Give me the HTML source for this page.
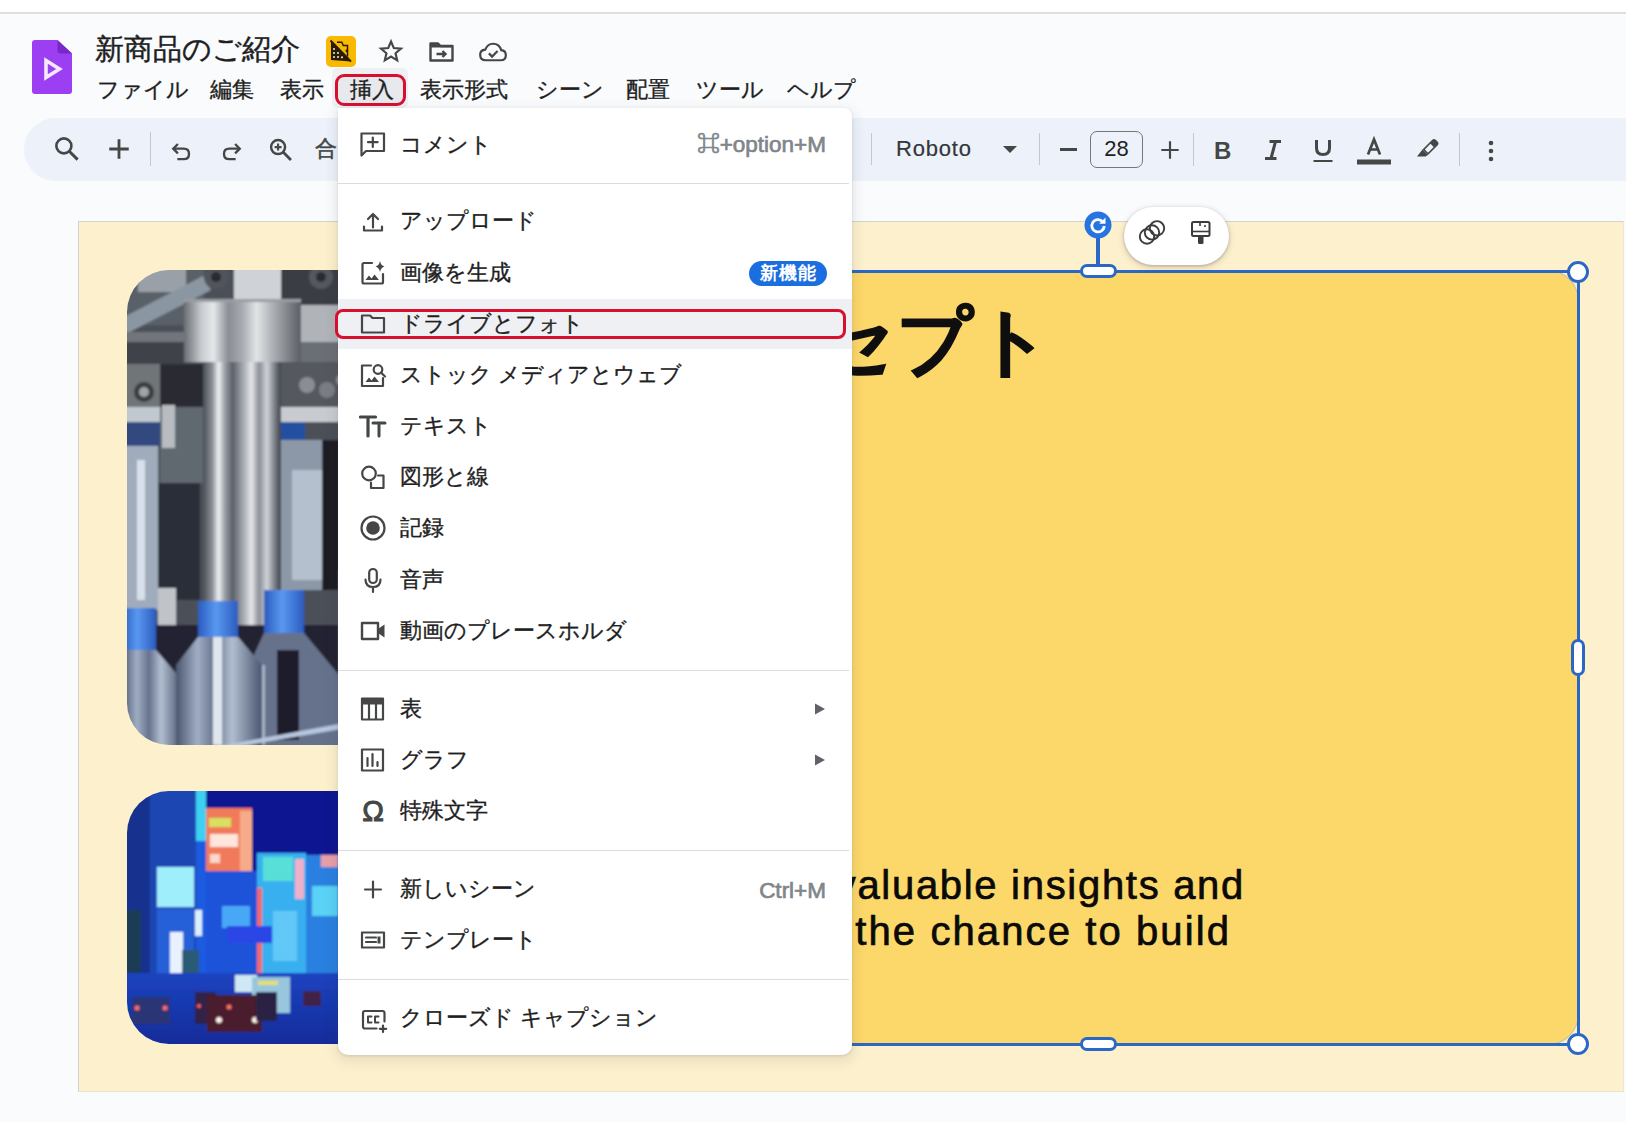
<!DOCTYPE html>
<html lang="ja">
<head>
<meta charset="utf-8">
<style>
*{margin:0;padding:0;box-sizing:border-box;}
html,body{width:1626px;height:1122px;overflow:hidden;background:#f9fbfd;font-family:"Liberation Sans",sans-serif;color:#1f1f1f;}
.abs{position:absolute;}
#topstrip{left:0;top:0;width:1626px;height:12px;background:#fff;}
#topline{left:0;top:12px;width:1626px;height:2px;background:#dde0e0;}
#title{left:95px;top:31px;font-size:29px;line-height:36px;white-space:nowrap;color:#1f1f1f;-webkit-text-stroke:0.4px #1f1f1f;}
.menu-top{top:76px;font-size:22px;line-height:28px;white-space:nowrap;color:#1f1f1f;-webkit-text-stroke:0.35px #1f1f1f;}
#toolbar{left:24px;top:118px;width:1640px;height:63px;border-radius:32px;background:#edf2fa;}
.sep{width:1px;background:#c7c7c7;}
svg{display:block;}
.msep{left:338px;width:511px;height:1px;background:#dadce0;}
.mi{left:400px;font-size:22px;line-height:30px;white-space:nowrap;color:#1f1f1f;-webkit-text-stroke:0.35px #1f1f1f;}
.msc{left:600px;width:226px;text-align:right;font-size:22.5px;line-height:30px;color:#80868b;white-space:nowrap;-webkit-text-stroke:0.7px #80868b;}
.mic{left:359px;}
.mic *{stroke-linecap:round;stroke-linejoin:round;}
.bt{font-size:40px;line-height:46px;letter-spacing:1.4px;color:#0a0a0a;text-align:right;white-space:nowrap;-webkit-text-stroke:0.7px #0a0a0a;}
</style>
</head>
<body>
<div id="topstrip" class="abs"></div>
<div id="topline" class="abs"></div>

<!-- logo -->
<svg class="abs" style="left:32px;top:40px" width="40" height="54" viewBox="0 0 40 54">
  <path d="M3 0 H25.5 L40 13.5 V51 Q40 54 37 54 H3 Q0 54 0 51 V3 Q0 0 3 0 Z" fill="#9c3ff2"/>
  <path d="M25.5 0 L40 13.5 H28.5 Q25.5 13.5 25.5 10.5 Z" fill="#7a27c9"/>
  <path d="M14 20.5 L27.5 29 L14 37.5 Z" fill="none" stroke="#f6e8ff" stroke-width="3.6" stroke-linejoin="miter"/>
</svg>

<div id="title" class="abs">新商品のご紹介</div>

<!-- title badges -->
<div class="abs" style="left:326px;top:36px;width:30px;height:31px;border-radius:5px;background:#f9b900;"></div>
<svg class="abs" style="left:326px;top:36px" width="30" height="31" viewBox="0 0 30 31">
  <path d="M5 5 L5 24 L25 25.5 Z" fill="#2a1c04"/>
  <g fill="#e9dcbc"><circle cx="8" cy="13" r="1.1"/><circle cx="8" cy="17" r="1.1"/><circle cx="12" cy="17" r="1.1"/><circle cx="8" cy="21" r="1.1"/><circle cx="12" cy="21" r="1.1"/><circle cx="16" cy="21.3" r="1.1"/></g>
  <path d="M11 6.3 H15.8 L17.3 9.6 H21.5 V20.5" fill="none" stroke="#2a1c04" stroke-width="1.5"/>
  <circle cx="20.8" cy="14.8" r="1.3" fill="#2a1c04"/>
  <path d="M4.5 4.5 L25 25.5" stroke="#2a1c04" stroke-width="1.8"/>
</svg>
<svg class="abs" style="left:378px;top:38px" width="26" height="26" viewBox="0 0 24 24">
  <path d="M12 3.2 L14.6 9.3 L21.2 9.8 L16.2 14.1 L17.7 20.6 L12 17.1 L6.3 20.6 L7.8 14.1 L2.8 9.8 L9.4 9.3 Z" fill="none" stroke="#444746" stroke-width="2" stroke-linejoin="miter"/>
</svg>
<svg class="abs" style="left:428px;top:40px" width="28" height="24" viewBox="0 0 28 24">
  <path d="M2.5 3.5 H10 L12.5 6 H24.5 V20.5 H2.5 Z" fill="none" stroke="#444746" stroke-width="2.4" stroke-linejoin="round"/>
  <path d="M2.5 3.5 H10 L12.5 6 H24.5 V7.5 H2.5 Z" fill="#444746"/>
  <path d="M8.5 14 H17.5 M14.5 11 L17.5 14 L14.5 17" fill="none" stroke="#444746" stroke-width="2.4"/>
</svg>
<svg class="abs" style="left:478px;top:41px" width="30" height="22" viewBox="0 0 32 24">
  <path d="M8 21 Q2 21 2 15 Q2 10 7.5 9.5 Q10 3 16 3 Q23 3 25 10 Q30 10.5 30 15.5 Q30 21 24.5 21 Z" fill="none" stroke="#444746" stroke-width="2.4"/>
  <path d="M11.5 13.5 L15 17 L21 11" fill="none" stroke="#444746" stroke-width="2.4"/>
</svg>

<!-- menubar -->
<div class="abs menu-top" style="left:97px">ファイル</div>
<div class="abs menu-top" style="left:210px">編集</div>
<div class="abs menu-top" style="left:280px">表示</div>
<div class="abs" style="left:332px;top:68px;width:76px;height:40px;border-radius:5px;background:#eef0f3;"></div>
<div class="abs" style="left:337px;top:76px;width:67px;height:28px;border-radius:6px;background:#e7e9ec;"></div>
<div class="abs menu-top" style="left:350px">挿入</div>
<div class="abs" style="left:335px;top:74px;width:71px;height:32px;border-radius:9px;border:3.5px solid #d8102e;"></div>
<div class="abs menu-top" style="left:420px">表示形式</div>
<div class="abs menu-top" style="left:536px">シーン</div>
<div class="abs menu-top" style="left:626px">配置</div>
<div class="abs menu-top" style="left:696px">ツール</div>
<div class="abs menu-top" style="left:787px">ヘルプ</div>

<!-- toolbar -->
<div id="toolbar" class="abs"></div>


<!-- slide -->
<div class="abs" style="left:78px;top:221px;width:1546px;height:871px;background:#fdf0cd;border:1px solid #d4d2cc;border-right-color:#eee6cf;border-bottom:1px solid #e8e2cf;"></div>

<!-- photo 1: factory -->
<svg class="abs" style="left:127px;top:270px" width="240" height="475" viewBox="0 0 240 475">
  <defs>
    <clipPath id="c1"><rect x="0" y="0" width="400" height="475" rx="42" ry="42"/></clipPath>
    <linearGradient id="cyl" x1="0" x2="1" y1="0" y2="0">
      <stop offset="0" stop-color="#6a6e74"/><stop offset="0.15" stop-color="#c8ccd0"/><stop offset="0.25" stop-color="#e6e8ea"/><stop offset="0.38" stop-color="#8a8e94"/><stop offset="0.5" stop-color="#a8acb2"/><stop offset="0.62" stop-color="#e2e4e6"/><stop offset="0.75" stop-color="#b0b4b8"/><stop offset="0.9" stop-color="#7c8086"/><stop offset="1" stop-color="#5a5e64"/>
    </linearGradient>
    <linearGradient id="col" x1="0" x2="1" y1="0" y2="0">
      <stop offset="0" stop-color="#4a4e56"/><stop offset="0.12" stop-color="#8c9198"/><stop offset="0.2" stop-color="#f0f2f4"/><stop offset="0.28" stop-color="#9a9ea6"/><stop offset="0.38" stop-color="#5c6068"/><stop offset="0.55" stop-color="#b8bcc2"/><stop offset="0.62" stop-color="#e6e8ea"/><stop offset="0.72" stop-color="#8a8e96"/><stop offset="0.82" stop-color="#d0d4d8"/><stop offset="0.92" stop-color="#7a7e86"/><stop offset="1" stop-color="#3e424a"/>
    </linearGradient>
    <linearGradient id="bod" x1="0" x2="1" y1="0" y2="0">
      <stop offset="0" stop-color="#4a5670"/><stop offset="0.25" stop-color="#a0aec4"/><stop offset="0.45" stop-color="#66728c"/><stop offset="0.65" stop-color="#b2bed0"/><stop offset="1" stop-color="#4a5670"/>
    </linearGradient>
    <linearGradient id="cap" x1="0" x2="1" y1="0" y2="0">
      <stop offset="0" stop-color="#2a5cc0"/><stop offset="0.45" stop-color="#5a98f0"/><stop offset="1" stop-color="#2a5cc0"/>
    </linearGradient>
    <filter id="bl1" x="-5%" y="-5%" width="110%" height="110%"><feGaussianBlur stdDeviation="1"/></filter>
  </defs>
  <g clip-path="url(#c1)"><g filter="url(#bl1)">
    <rect x="-5" y="-5" width="250" height="485" fill="#4c5058"/>
    <rect x="-5" y="-5" width="82" height="60" fill="#5a6068"/>
    <rect x="11" y="-5" width="48" height="27" fill="#9aa0a8"/>
    <path d="M-5 48 L76 6 L84 20 L-5 66 Z" fill="#8a96a2"/>
    <rect x="107" y="-5" width="47" height="36" fill="#cfd3d7"/>
    <rect x="154" y="-5" width="90" height="40" fill="#3a3e44"/>
    <circle cx="89" cy="7" r="12" fill="#50545a"/><circle cx="89" cy="7" r="5" fill="#2a2c30"/>
    <circle cx="194" cy="7" r="12" fill="#55595e"/><circle cx="194" cy="7" r="5" fill="#2a2c30"/>
    <rect x="174" y="35" width="70" height="37" fill="#b0b4b8"/>
    <rect x="174" y="72" width="70" height="20" fill="#6a6e74"/>
    <rect x="-5" y="62" width="62" height="10" fill="#70767c"/>
    <rect x="-5" y="72" width="62" height="22" fill="#40424a"/>
    <rect x="-5" y="94" width="38" height="43" fill="#707478"/>
    <circle cx="17" cy="122" r="10" fill="#3a3c40"/><circle cx="17" cy="122" r="5" fill="#a0a4a8"/>
    <rect x="33" y="94" width="43" height="43" fill="#2a2c30"/>
    <rect x="-5" y="137" width="38" height="15" fill="#c0c8d0"/>
    <rect x="-5" y="152" width="38" height="24" fill="#304880"/>
    <rect x="-5" y="176" width="36" height="164" fill="#a0acbc"/>
    <rect x="10" y="190" width="8" height="140" fill="#d8e0ea"/>
    <rect x="33" y="137" width="43" height="76" fill="#606870"/>
    <rect x="35" y="135" width="13" height="43" fill="#b8bcc0"/>
    <rect x="31" y="213" width="42" height="117" fill="#2a2e38"/>
    <rect x="31" y="318" width="18" height="45" fill="#c0c4c8"/>
    <rect x="154" y="92" width="90" height="45" fill="#55595e"/>
    <circle cx="180" cy="115" r="8" fill="#8a8e92"/><circle cx="200" cy="120" r="8" fill="#7a7e84"/><circle cx="215" cy="110" r="6" fill="#90949a"/>
    <rect x="154" y="137" width="90" height="15" fill="#c8ccd0"/>
    <rect x="154" y="152" width="24" height="18" fill="#2050a0"/>
    <rect x="154" y="170" width="56" height="150" fill="#8c98a8"/>
    <rect x="165" y="200" width="30" height="110" fill="#b4c0ce"/>
    <rect x="195" y="170" width="50" height="150" fill="#1a1c24"/>
    <rect x="57" y="29" width="117" height="63" fill="url(#cyl)"/>
    <rect x="57" y="29" width="117" height="3" fill="#9a9ea4"/>
    <rect x="76" y="92" width="78" height="290" fill="url(#col)"/>
    <rect x="-5" y="355" width="250" height="125" fill="#202430"/>
    <path d="M-5 338 H29 V380 L55 410 V480 H-5 Z" fill="url(#bod)"/>
    <rect x="-5" y="338" width="34" height="42" fill="url(#cap)"/>
    <path d="M137 320 H177 V363 L212 405 V480 H120 V400 L137 363 Z" fill="#66728c"/>
    <rect x="150" y="380" width="22" height="90" fill="#1a1e2a"/>
    <rect x="128" y="395" width="10" height="80" fill="#a6b2c6"/>
    <rect x="137" y="320" width="40" height="43" fill="url(#cap)"/>
    <path d="M71 331 H111 V367 L135 395 V480 H49 V395 L71 367 Z" fill="url(#bod)"/>
    <rect x="86" y="367" width="9" height="108" fill="#e0e6ee"/>
    <rect x="71" y="331" width="40" height="36" fill="url(#cap)"/>
    <rect x="212" y="300" width="33" height="180" fill="#7a86a0"/>
    <path d="M82 478 L245 448 L245 454 L90 480 Z" fill="#b8c8e0"/>
  </g></g>
</svg>

<!-- photo 2: city -->
<svg class="abs" style="left:127px;top:791px" width="240" height="253" viewBox="0 0 240 253">
  <defs>
    <clipPath id="c2"><rect x="0" y="0" width="400" height="253" rx="42" ry="42"/></clipPath>
    <linearGradient id="street" x1="0" x2="0" y1="0" y2="1"><stop offset="0" stop-color="#1c44c0"/><stop offset="1" stop-color="#122a98"/></linearGradient>
    <filter id="bl2" x="-5%" y="-5%" width="110%" height="110%"><feGaussianBlur stdDeviation="1.3"/></filter>
  </defs>
  <g clip-path="url(#c2)"><g filter="url(#bl2)">
    <rect x="-5" y="-5" width="250" height="265" fill="#0b1890"/>
    <rect x="-5" y="-5" width="74" height="200" fill="#1a46b2"/>
    <rect x="-5" y="-5" width="28" height="200" fill="#13308e"/>
    <rect x="69" y="-5" width="10" height="55" fill="#3ed0f2"/>
    <rect x="69" y="50" width="10" height="140" fill="#1a5ae0"/>
    <rect x="30" y="76" width="37" height="40" fill="#9eeefc"/>
    <rect x="30" y="118" width="37" height="70" fill="#2660d8"/>
    <rect x="43" y="141" width="13" height="41" fill="#e8f2ff"/>
    <rect x="68" y="119" width="7" height="26" fill="#d8f0ff"/>
    <rect x="79" y="17" width="46" height="63" fill="#f07a5a"/>
    <rect x="113" y="20" width="12" height="60" fill="#f6ac8a"/>
    <rect x="82" y="27" width="22" height="9" fill="#d8e060"/>
    <rect x="83" y="43" width="28" height="13" fill="#fde6dc"/>
    <rect x="83" y="63" width="10" height="9" fill="#fbd8cc"/>
    <rect x="79" y="80" width="51" height="105" fill="#1c52d8"/>
    <rect x="95" y="115" width="28" height="22" fill="#4aa8f6"/>
    <rect x="130" y="62" width="49" height="125" fill="#38b0f0"/>
    <rect x="136" y="66" width="30" height="24" fill="#58e0d8"/>
    <rect x="168" y="68" width="9" height="40" fill="#f0b0c8"/>
    <rect x="130" y="97" width="5" height="90" fill="#f06a6a"/>
    <rect x="146" y="120" width="24" height="50" fill="#62c8f8"/>
    <rect x="179" y="64" width="32" height="123" fill="#2a80e0"/>
    <rect x="194" y="64" width="17" height="12" fill="#e8a0a8"/>
    <rect x="185" y="95" width="26" height="30" fill="#5ad2f6"/>
    <rect x="211" y="64" width="30" height="123" fill="#2874de"/>
    <rect x="100" y="135" width="45" height="17" fill="#2a46e6"/>
    <rect x="-5" y="119" width="19" height="80" fill="#1c3a54"/>
    <rect x="55" y="159" width="17" height="40" fill="#2a5a74"/>
    <rect x="-5" y="182" width="250" height="75" fill="url(#street)"/>
    <rect x="108" y="184" width="22" height="17" fill="#d0e8f4"/>
    <rect x="125" y="186" width="38" height="36" fill="#98c6dc"/>
    <rect x="131" y="190" width="20" height="4" fill="#e8e060"/>
    <rect x="5" y="206" width="38" height="27" fill="#2c3474"/>
    <circle cx="10" cy="217" r="2.5" fill="#ff6a6a"/><circle cx="38" cy="217" r="2.5" fill="#ff6a6a"/>
    <rect x="68" y="201" width="21" height="32" fill="#302244"/>
    <circle cx="72" cy="215" r="2" fill="#ff6060"/>
    <rect x="80" y="204" width="55" height="37" fill="#4a1c2e"/>
    <circle cx="102" cy="216" r="2.5" fill="#ff7060"/>
    <circle cx="92" cy="229" r="3" fill="#fff4e8"/><circle cx="128" cy="229" r="3" fill="#fff4e8"/>
    <rect x="129" y="201" width="21" height="29" fill="#2a2044"/>
    <rect x="176" y="200" width="18" height="15" fill="#40204a"/>
  </g></g>
</svg>

<!-- yellow box -->
<div class="abs" style="left:345px;top:271px;width:1233px;height:773px;background:#fcd769;border-radius:0 30px 30px 0;box-shadow:0 0 0 1px rgba(150,150,150,0.55);"></div>
<div id="concept" class="abs" style="left:432px;top:292px;width:621px;font-size:74px;line-height:100px;font-weight:bold;letter-spacing:2px;color:#0f0f0f;text-align:right;white-space:nowrap;-webkit-text-stroke:1.5px #0f0f0f;">コンセプト</div>
<div id="bt1" class="abs bt" style="left:500px;top:862px;width:745px;letter-spacing:1.7px;">customers gain valuable insights and</div>
<div id="bt2" class="abs bt" style="left:500px;top:908px;width:731px;letter-spacing:2.1px;">customers have the chance to build</div>

<!-- selection -->
<div class="abs" style="left:345px;top:270px;width:1235px;height:776px;border:3px solid #2b67c6;border-left:none;"></div>
<div class="abs" style="left:1096px;top:236px;width:4px;height:30px;background:#2b67c6;"></div>
<svg class="abs" style="left:1083px;top:210px" width="30" height="30" viewBox="0 0 30 30">
  <circle cx="15" cy="15" r="13.5" fill="#2674e0"/>
  <path d="M19.8 11.8 A6.2 6.2 0 1 0 21.2 16" fill="none" stroke="#fff" stroke-width="2.8"/>
  <path d="M22.5 7.5 V13.8 H16.2 Z" fill="#fff"/>
</svg>
<div class="abs" style="left:1080px;top:264px;width:37px;height:14px;border:3px solid #2b67c6;border-radius:7px;background:#fff;"></div>
<div class="abs" style="left:1080px;top:1037px;width:37px;height:14px;border:3px solid #2b67c6;border-radius:7px;background:#fff;"></div>
<div class="abs" style="left:1571px;top:639px;width:14px;height:37px;border:3px solid #2b67c6;border-radius:7px;background:#fff;"></div>
<div class="abs" style="left:1567px;top:261px;width:22px;height:22px;border:3px solid #2b67c6;border-radius:50%;background:#fff;"></div>
<div class="abs" style="left:1567px;top:1033px;width:22px;height:22px;border:3px solid #2b67c6;border-radius:50%;background:#fff;"></div>

<!-- floating mini toolbar -->
<div class="abs" style="left:1124px;top:207px;width:105px;height:58px;border-radius:29px;background:#fff;box-shadow:0 1px 3px rgba(60,64,67,0.3),0 2px 6px 1px rgba(60,64,67,0.15);"></div>
<svg class="abs" style="left:1137px;top:218px" width="30" height="30" viewBox="0 0 30 30">
  <circle cx="10" cy="18.5" r="7.2" fill="none" stroke="#3c3c3c" stroke-width="1.9"/>
  <circle cx="15" cy="14.4" r="7.2" fill="none" stroke="#3c3c3c" stroke-width="1.9"/>
  <circle cx="20" cy="10.3" r="7.2" fill="none" stroke="#3c3c3c" stroke-width="1.9"/>
</svg>
<svg class="abs" style="left:1187px;top:218px" width="26" height="30" viewBox="0 0 26 30">
  <rect x="5" y="4" width="17.5" height="14" rx="1.5" fill="none" stroke="#3c3c3c" stroke-width="2"/>
  <path d="M5 13.5 H22.5" stroke="#3c3c3c" stroke-width="1.6"/>
  <path d="M13 4 V8 M18 7 V9" stroke="#3c3c3c" stroke-width="1.6"/>
  <rect x="11" y="18" width="5.5" height="8" rx="1.5" fill="#3c3c3c"/>
</svg>
<!-- toolbar icons -->
<svg class="abs" style="left:52px;top:134px" width="30" height="30" viewBox="0 0 24 24">
  <circle cx="9.5" cy="9.5" r="6" fill="none" stroke="#444746" stroke-width="2.1"/>
  <path d="M14 14 L20.5 20.5" stroke="#444746" stroke-width="2.4"/>
</svg>
<svg class="abs" style="left:106px;top:136px" width="26" height="26" viewBox="0 0 24 24">
  <path d="M12 3 V21 M3 12 H21" stroke="#444746" stroke-width="2.6"/>
</svg>
<div class="abs sep" style="left:150px;top:132px;height:34px;"></div>
<svg class="abs" style="left:168px;top:137px" width="28" height="28" viewBox="0 0 24 24">
  <path d="M8.5 6 L4.5 10 L8.5 14" fill="none" stroke="#444746" stroke-width="2"/>
  <path d="M5 10 H13.5 Q18 10 18 14.5 Q18 19 13.5 19 H8" fill="none" stroke="#444746" stroke-width="2"/>
</svg>
<svg class="abs" style="left:217px;top:137px" width="28" height="28" viewBox="0 0 24 24">
  <path d="M15.5 6 L19.5 10 L15.5 14" fill="none" stroke="#444746" stroke-width="2"/>
  <path d="M19 10 H10.5 Q6 10 6 14.5 Q6 19 10.5 19 H16" fill="none" stroke="#444746" stroke-width="2"/>
</svg>
<svg class="abs" style="left:267px;top:136px" width="28" height="28" viewBox="0 0 24 24">
  <circle cx="9.5" cy="9.5" r="6" fill="none" stroke="#444746" stroke-width="2.1"/>
  <path d="M14 14 L20.5 20.5" stroke="#444746" stroke-width="2.4"/>
  <path d="M9.5 6.5 V12.5 M6.5 9.5 H12.5" stroke="#444746" stroke-width="1.8"/>
</svg>
<div class="abs" style="left:315px;top:134px;font-size:22px;line-height:30px;color:#444746;-webkit-text-stroke:0.5px #444746;">合</div>

<div class="abs sep" style="left:871px;top:133px;height:32px;"></div>
<div class="abs" style="left:896px;top:134px;font-size:22px;line-height:30px;letter-spacing:0.8px;color:#33373a;-webkit-text-stroke:0.2px #33373a;">Roboto</div>
<svg class="abs" style="left:1000px;top:143px" width="20" height="12" viewBox="0 0 20 12"><path d="M3 3 H17 L10 10 Z" fill="#444746"/></svg>
<div class="abs sep" style="left:1039px;top:133px;height:32px;"></div>
<div class="abs" style="left:1060px;top:148px;width:17px;height:2.5px;background:#444746;"></div>
<div class="abs" style="left:1090px;top:131px;width:53px;height:37px;border:1.5px solid #747775;border-radius:7px;font-size:22px;line-height:34px;text-align:center;color:#1f1f1f;">28</div>
<svg class="abs" style="left:1157px;top:137px" width="26" height="26" viewBox="0 0 24 24">
  <path d="M12 4 V20 M4 12 H20" stroke="#444746" stroke-width="2"/>
</svg>
<div class="abs sep" style="left:1193px;top:133px;height:33px;"></div>
<div class="abs" style="left:1214px;top:134.5px;font-size:24px;line-height:32px;font-weight:bold;color:#444746;">B</div>
<svg class="abs" style="left:1260px;top:137px" width="26" height="26" viewBox="0 0 26 26">
  <path d="M9.5 4.5 H21 M5 21.5 H16.5 M15.5 4.5 L11 21.5" stroke="#444746" stroke-width="3"/>
</svg>
<svg class="abs" style="left:1310px;top:136px" width="26" height="28" viewBox="0 0 26 28">
  <path d="M6.5 4 V12 Q6.5 18.5 13 18.5 Q19.5 18.5 19.5 12 V4" fill="none" stroke="#444746" stroke-width="3"/>
  <path d="M3.5 25 H22.5" stroke="#444746" stroke-width="2"/>
</svg>
<svg class="abs" style="left:1355px;top:134px" width="38" height="32" viewBox="0 0 38 32">
  <path d="M13 20.5 L19 5.5 L25 20.5 M14.8 15.5 H23.2" fill="none" stroke="#444746" stroke-width="2.7"/>
  <rect x="2" y="25.5" width="34" height="5" fill="#444746"/>
</svg>
<svg class="abs" style="left:1414px;top:134px" width="28" height="24" viewBox="0 0 28 24">
  <path d="M8.5 15.5 L18 6 Q20 4 22 6 L23.5 7.5 Q25.5 9.5 23.5 11.5 L14 21 Z" fill="#444746"/>
  <path d="M10.8 15.5 L16.5 9.8 L19.7 13 L14 18.7 Z" fill="#eef2fa"/>
  <path d="M8.5 15.5 L14 21 L11.5 22.5 L3 22.5 Z" fill="#444746"/>
</svg>
<div class="abs sep" style="left:1459px;top:133px;height:33px;"></div>
<svg class="abs" style="left:1486px;top:140px" width="10" height="22" viewBox="0 0 10 22">
  <circle cx="5" cy="3" r="2.3" fill="#444746"/><circle cx="5" cy="11" r="2.3" fill="#444746"/><circle cx="5" cy="19" r="2.3" fill="#444746"/>
</svg>

<!-- insert menu -->
<div class="abs" style="left:338px;top:108px;width:514px;height:947px;background:#fff;border-radius:0 8px 10px 10px;box-shadow:0 1px 3px rgba(60,64,67,0.14),0 4px 12px 3px rgba(60,64,67,0.10);"></div>
<div class="abs" style="left:338px;top:299px;width:514px;height:50px;background:#eef0f3;"></div>
<div class="abs" style="left:335px;top:309px;width:511px;height:30px;border:3px solid #d8102e;border-radius:8px;"></div>
<div class="abs msep" style="top:183px"></div>
<div class="abs msep" style="top:670px"></div>
<div class="abs msep" style="top:850px"></div>
<div class="abs msep" style="top:979px"></div>
<div class="abs mi" style="top:130px">コメント</div>
<div class="abs mi" style="top:206px">アップロード</div>
<div class="abs mi" style="top:258px">画像を生成</div>
<div class="abs mi" style="top:309px">ドライブとフォト</div>
<div class="abs mi" style="top:360px">ストック メディアとウェブ</div>
<div class="abs mi" style="top:411px">テキスト</div>
<div class="abs mi" style="top:462px">図形と線</div>
<div class="abs mi" style="top:513px">記録</div>
<div class="abs mi" style="top:565px">音声</div>
<div class="abs mi" style="top:616px">動画のプレースホルダ</div>
<div class="abs mi" style="top:694px">表</div>
<div class="abs mi" style="top:745px">グラフ</div>
<div class="abs mi" style="top:796px">特殊文字</div>
<div class="abs mi" style="top:874px">新しいシーン</div>
<div class="abs mi" style="top:925px">テンプレート</div>
<div class="abs mi" style="top:1003px">クローズド キャプション</div>
<div class="abs msc" style="top:130px">⌘+option+M</div>
<div class="abs msc" style="top:876px">Ctrl+M</div>
<div class="abs" style="left:749px;top:261px;width:78px;height:25px;border-radius:13px;background:#1b6ee0;color:#fff;font-size:18px;line-height:25px;text-align:center;font-weight:bold;letter-spacing:1px;text-indent:1px;">新機能</div>
<svg class="abs" style="left:813px;top:702px" width="14" height="14" viewBox="0 0 14 14"><path d="M2 1.5 L12 7 L2 12.5 Z" fill="#5f6368"/></svg>
<svg class="abs" style="left:813px;top:753px" width="14" height="14" viewBox="0 0 14 14"><path d="M2 1.5 L12 7 L2 12.5 Z" fill="#5f6368"/></svg>

<!-- menu icons -->
<svg class="abs mic" style="top:131px" width="28" height="28" viewBox="0 0 28 28">
  <path d="M2.5 24.5 V2.5 H25 V20 H7 Z" fill="none" stroke="#444746" stroke-width="2.2" stroke-linejoin="miter"/>
  <path d="M13.8 6.5 V16 M9 11.2 H18.6" stroke="#444746" stroke-width="2.2"/>
</svg>
<svg class="abs mic" style="top:207px" width="28" height="28" viewBox="0 0 28 28">
  <path d="M14 20.5 V7 M9 12 L14 7 L19 12" fill="none" stroke="#444746" stroke-width="2.2"/>
  <path d="M5 19.5 V23.5 H23 V19.5" fill="none" stroke="#444746" stroke-width="2.2"/>
</svg>
<svg class="abs mic" style="top:259px" width="28" height="28" viewBox="0 0 28 28">
  <path d="M13 4 H5 Q3.5 4 3.5 5.5 V23 Q3.5 24.5 5 24.5 H22.5 Q24 24.5 24 23 V15" fill="none" stroke="#444746" stroke-width="2.2"/>
  <path d="M6.5 21 L10 16.5 L12.5 19.5 L15.5 15.5 L20 21 Z" fill="#444746"/>
  <path d="M21 2 Q21.8 6.5 25.5 7.5 Q21.8 8.5 21 13 Q20.2 8.5 16.5 7.5 Q20.2 6.5 21 2 Z" fill="#444746"/>
</svg>
<svg class="abs mic" style="top:310px" width="28" height="28" viewBox="0 0 28 28">
  <path d="M3 5.5 H11 L13.5 8 H25 V22.5 H3 Z" fill="none" stroke="#444746" stroke-width="2.2" stroke-linejoin="miter"/>
</svg>
<svg class="abs mic" style="top:361px" width="28" height="28" viewBox="0 0 28 28">
  <path d="M12 4.5 H3 V25 H24 V17" fill="none" stroke="#444746" stroke-width="2.2"/>
  <path d="M6.5 21 L10 16.5 L12.5 19.5 L15.5 15.5 L20 21 Z" fill="#444746"/>
  <circle cx="19" cy="8.5" r="4.3" fill="none" stroke="#444746" stroke-width="2.2"/>
  <path d="M22 11.5 L26 15.5" stroke="#444746" stroke-width="2.2"/>
</svg>
<svg class="abs mic" style="top:412px" width="30" height="28" viewBox="0 0 30 28">
  <path d="M1.5 5 H16.5 M9 5 V24" stroke="#444746" stroke-width="3.2"/>
  <path d="M14 11 H26 M20 11 V24" stroke="#444746" stroke-width="3"/>
</svg>
<svg class="abs mic" style="top:463px" width="28" height="28" viewBox="0 0 28 28">
  <circle cx="10" cy="10.5" r="6.8" fill="none" stroke="#444746" stroke-width="2.2"/>
  <path d="M19 12.5 H24.5 V25 H12 V19.5" fill="none" stroke="#444746" stroke-width="2.2"/>
</svg>
<svg class="abs mic" style="top:514px" width="28" height="28" viewBox="0 0 28 28">
  <circle cx="14" cy="14" r="11.5" fill="none" stroke="#444746" stroke-width="2.2"/>
  <circle cx="14" cy="14" r="6.8" fill="#444746"/>
</svg>
<svg class="abs mic" style="top:566px" width="28" height="28" viewBox="0 0 28 28">
  <rect x="10.2" y="3" width="7.6" height="14" rx="3.8" fill="none" stroke="#444746" stroke-width="2.2"/>
  <path d="M6.5 13.5 Q6.5 21 14 21 Q21.5 21 21.5 13.5 M14 21 V26" fill="none" stroke="#444746" stroke-width="2.2"/>
</svg>
<svg class="abs mic" style="top:617px" width="28" height="28" viewBox="0 0 28 28">
  <path d="M3 6 H19 V22 H3 Z" fill="none" stroke="#444746" stroke-width="2.4"/>
  <path d="M19 12 L25.5 7.5 V20.5 L19 16 Z" fill="#444746"/>
</svg>
<svg class="abs mic" style="top:695px" width="28" height="28" viewBox="0 0 28 28">
  <path d="M3 3.5 H24 V24.5 H3 Z M3 8.5 H24 M10 9.5 V24.5 M17 9.5 V24.5" fill="none" stroke="#444746" stroke-width="2.2"/><rect x="3" y="3.5" width="21" height="5" fill="#444746"/>
</svg>
<svg class="abs mic" style="top:746px" width="28" height="28" viewBox="0 0 28 28">
  <path d="M3 3.5 H24 V24.5 H3 Z" fill="none" stroke="#444746" stroke-width="2.2"/>
  <path d="M8.5 12 V20 M13.5 8 V20 M18.5 16 V20" stroke="#444746" stroke-width="2.2"/>
</svg>
<div class="abs" style="left:358px;top:795px;width:30px;font-size:29px;line-height:32px;color:#444746;text-align:center;-webkit-text-stroke:1px #444746;">Ω</div>
<svg class="abs mic" style="top:875px" width="28" height="28" viewBox="0 0 28 28">
  <path d="M14 6.5 V22.5 M6 14.5 H22" stroke="#444746" stroke-width="2.2"/>
</svg>
<svg class="abs mic" style="top:926px" width="28" height="28" viewBox="0 0 28 28">
  <path d="M3 6.5 H25 V21.5 H3 Z" fill="none" stroke="#444746" stroke-width="2.2"/>
  <path d="M7 11.5 H17 M7 16 H17" stroke="#444746" stroke-width="2.2"/>
  <rect x="18.5" y="10.5" width="3" height="7" fill="#444746"/>
</svg>
<svg class="abs mic" style="top:1004px" width="30" height="30" viewBox="0 0 30 30">
  <path d="M17.5 24.5 H6 Q4 24.5 4 22.5 V9 Q4 7 6 7 H23.5 Q25.5 7 25.5 9 V17.5" fill="none" stroke="#444746" stroke-width="2.2"/>
  <path d="M12.5 12.5 H9 V18.5 H12.5 M19.5 12.5 H16 V18.5 H19.5" fill="none" stroke="#444746" stroke-width="2"/>
  <path d="M24 21.5 V28 M20.8 24.8 H27.2" stroke="#444746" stroke-width="2.2"/>
</svg>

</body>
</html>
